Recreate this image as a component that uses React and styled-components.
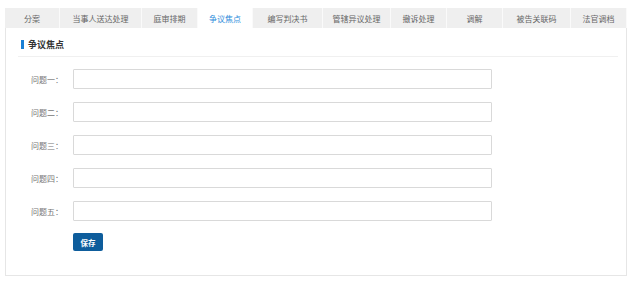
import styled, { createGlobalStyle } from "styled-components";

const GlobalStyle = createGlobalStyle`
  html, body {
    margin: 0;
    padding: 0;
    background: #fff;
  }
  body {
    font-family: "Noto Sans CJK SC", "Liberation Sans", sans-serif;
  }
`;

const Page = styled.div`
  padding: 8px 13px 0 5px;
`;

const TabBar = styled.div`
  display: flex;
  height: 20px;
  background-color: #efefef;
`;

const Tab = styled.div`
  width: ${({ w }) => w}px;
  display: flex;
  align-items: center;
  justify-content: center;
  font-size: 8px;
  color: ${({ active }) => (active ? "#2f8ddb" : "#666")};
  background-color: ${({ active }) => (active ? "#fff" : "transparent")};
  border-right: 1px solid #fafafa;
  box-sizing: border-box;
  white-space: nowrap;
`;

const Panel = styled.div`
  border: 1px solid #e6e6e6;
  border-top: none;
  height: 248px;
  box-sizing: border-box;
  padding: 12px 8px 0 12px;
`;

const SectionTitle = styled.div`
  display: flex;
  align-items: center;
  gap: 4px;
  height: 9px;
  padding: 0 0 7px 3px;
  border-bottom: 1px solid #f0f0f0;
  font-size: 9px;
  font-weight: bold;
  color: #333;

  &::before {
    content: "";
    width: 3px;
    height: 9px;
    background-color: #1a7fd4;
  }
`;

const Form = styled.div`
  display: flex;
  flex-direction: column;
  gap: 13px;
  padding-top: 12px;
`;

const Row = styled.div`
  display: flex;
  align-items: center;
  gap: 10px;
`;

const Label = styled.span`
  width: 45px;
  text-align: right;
  font-size: 8px;
  color: #777;
  white-space: nowrap;
`;

const Input = styled.input`
  width: 419px;
  height: 20px;
  margin: 0;
  box-sizing: border-box;
  border: 1px solid #d9d9d9;
  border-radius: 1px;
  outline: none;
  padding: 0 4px;
  font-size: 8px;
`;

const Actions = styled.div`
  display: flex;
  padding: 12px 0 0 55px;
`;

const SaveButton = styled.button`
  width: 30px;
  height: 18px;
  padding: 0;
  border: none;
  border-radius: 2px;
  background-color: #0e5d9c;
  color: #fff;
  font-family: inherit;
  font-size: 7.5px;
  font-weight: bold;
`;

const TABS = [
  { label: "分案", w: 55 },
  { label: "当事人送达处理", w: 82 },
  { label: "庭审排期", w: 56 },
  { label: "争议焦点", w: 55, active: true },
  { label: "编写判决书", w: 70 },
  { label: "管辖异议处理", w: 68 },
  { label: "撤诉处理", w: 56 },
  { label: "调解", w: 56 },
  { label: "被告关联码", w: 68 },
  { label: "法官调档", w: 56 },
];

const QUESTIONS = ["问题一：", "问题二：", "问题三：", "问题四：", "问题五："];

export default function App() {
  return (
    <>
      <GlobalStyle />
      <Page>
        <TabBar>
          {TABS.map((t) => (
            <Tab key={t.label} w={t.w} active={t.active}>
              {t.label}
            </Tab>
          ))}
        </TabBar>
        <Panel>
          <SectionTitle>争议焦点</SectionTitle>
          <Form>
            {QUESTIONS.map((q) => (
              <Row key={q}>
                <Label>{q}</Label>
                <Input type="text" />
              </Row>
            ))}
          </Form>
          <Actions>
            <SaveButton>保存</SaveButton>
          </Actions>
        </Panel>
      </Page>
    </>
  );
}
